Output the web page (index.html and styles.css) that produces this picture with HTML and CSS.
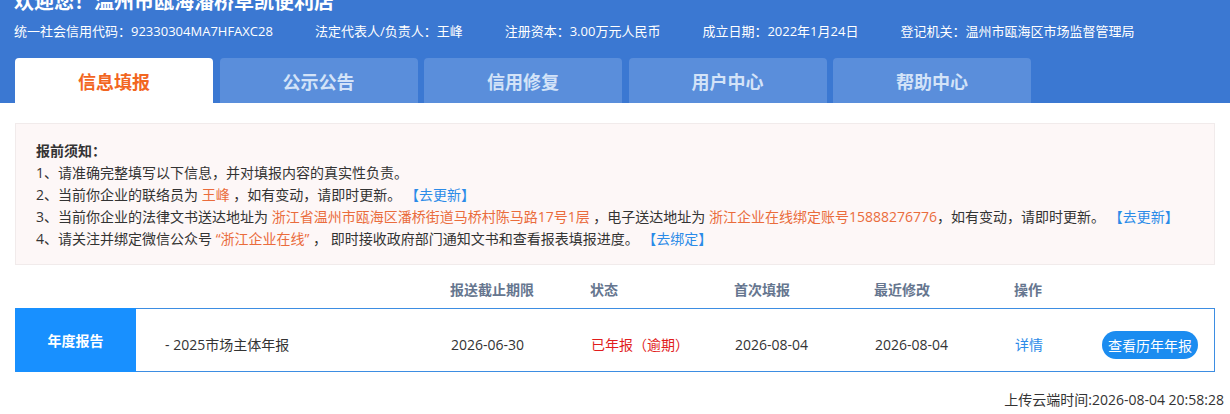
FILE: index.html
```html
<!DOCTYPE html>
<html lang="zh-CN">
<head>
<meta charset="utf-8">
<title>信息填报</title>
<link rel="stylesheet" href="styles.css">
</head>
<body>
<header class="top">
  <h1 class="welcome">欢迎您！温州市瓯海潘桥阜凯便利店</h1>
  <div class="info">
    <span class="info-item">统一社会信用代码：92330304MA7HFAXC28</span>
    <span class="info-item">法定代表人/负责人：王峰</span>
    <span class="info-item">注册资本：3.00万元人民币</span>
    <span class="info-item">成立日期：2022年1月24日</span>
    <span class="info-item">登记机关：温州市瓯海区市场监督管理局</span>
  </div>
  <nav class="tabs">
    <a class="tab active">信息填报</a>
    <a class="tab">公示公告</a>
    <a class="tab">信用修复</a>
    <a class="tab">用户中心</a>
    <a class="tab">帮助中心</a>
  </nav>
</header>

<main class="content">
  <section class="notice">
    <p class="notice-title">报前须知：</p>
    <p>1、请准确完整填写以下信息，并对填报内容的真实性负责。</p>
    <p>2、当前你企业的联络员为 <span class="hl">王峰</span> ，如有变动，请即时更新。 <a class="link">【去更新】</a></p>
    <p>3、当前你企业的法律文书送达地址为 <span class="hl">浙江省温州市瓯海区潘桥街道马桥村陈马路17号1层</span> ，电子送达地址为 <span class="hl">浙江企业在线绑定账号15888276776</span>，如有变动，请即时更新。 <a class="link">【去更新】</a></p>
    <p>4、请关注并绑定微信公众号 <span class="hl">“浙江企业在线”</span> ， 即时接收政府部门通知文书和查看报表填报进度。 <a class="link">【去绑定】</a></p>
  </section>

  <div class="grid head">
    <span></span>
    <span></span>
    <span>报送截止期限</span>
    <span>状态</span>
    <span>首次填报</span>
    <span>最近修改</span>
    <span>操作</span>
    <span></span>
  </div>

  <div class="grid report">
    <div class="kind">年度报告</div>
    <div class="cell name">- 2025市场主体年报</div>
    <div class="cell">2026-06-30</div>
    <div class="cell status">已年报（逾期）</div>
    <div class="cell">2026-08-04</div>
    <div class="cell">2026-08-04</div>
    <div class="cell"><a class="link">详情</a></div>
    <div class="cell"><button class="btn" type="button">查看历年年报</button></div>
  </div>

  <div class="upload">上传云端时间:2026-08-04 20:58:28</div>
</main>
</body>
</html>
```

FILE: styles.css
```css
* { box-sizing: border-box; }

html, body {
  margin: 0;
  padding: 0;
  background: #ffffff;
  overflow: hidden;
}

body {
  font-family: "Open Sans", "Noto Sans CJK SC", sans-serif;
  color: #333333;
  width: 1230px;
  height: 414px;
}

.top {
  background: #3b78d2;
  padding: 0 0 0 14px;
  height: 103px;
  display: flex;
  flex-direction: column;
}

.welcome {
  margin: -12px 0 0 0;
  font-size: 20px;
  line-height: 28px;
  font-weight: 700;
  color: #ffffff;
}

.info {
  margin-top: 5px;
  display: flex;
  font-size: 13px;
  line-height: 20px;
  color: #ffffff;
}

.info-item { margin-right: 42px; }

.tabs {
  margin-top: 17px;
  margin-left: 1px;
  display: flex;
  gap: 6.5px;
}

.tab {
  width: 198px;
  height: 45px;
  border-radius: 4px 4px 0 0;
  background: #5a8edb;
  color: #d3e3f8;
  font-size: 18px;
  font-weight: 700;
  display: flex;
  align-items: center;
  justify-content: center;
}

.tab.active {
  background: #ffffff;
  color: #f2661f;
}

.content {
  padding: 20px 0 0 15px;
}

.notice {
  width: 1200px;
  background: #fdf7f7;
  border: 1px solid #f1ebeb;
  padding: 16px 20px 14px 20px;
  font-size: 14px;
  line-height: 22px;
  color: #333333;
}

.notice p { margin: 0; white-space: nowrap; }

.notice-title { font-weight: 700; }

.hl { color: #ea6c3c; }

.link { color: #2b8be8; cursor: pointer; }

.grid {
  width: 1200px;
  display: grid;
  grid-template-columns: 120px 315px 140px 144px 140px 140px 88px 1fr;
  font-size: 14px;
}

.head {
  margin-top: 15px;
  height: 20px;
  line-height: 20px;
  font-weight: 700;
  color: #66768f;
}

.report {
  margin-top: 8px;
  height: 64px;
  border: 1px solid #3d8de2;
  align-items: center;
}

.kind {
  align-self: stretch;
  margin: -1px 0 -1px -1px;
  background: #1890ff;
  border-radius: 2px 0 0 2px;
  color: #ffffff;
  font-weight: 700;
  font-size: 14px;
  display: flex;
  align-items: center;
  justify-content: center;
}

.cell {
  padding-top: 10px;
  line-height: 20px;
  color: #333333;
  white-space: nowrap;
}

.cell.name { padding-left: 29px; }

.status { color: #e11c1c; }

.btn {
  width: 96px;
  height: 28px;
  margin-left: -1px;
  border: none;
  border-radius: 14px;
  background: #1b8cf0;
  color: #ffffff;
  font-family: inherit;
  font-size: 14px;
  padding: 0;
  cursor: pointer;
  display: block;
}

.upload {
  margin-top: 18px;
  padding-right: 6px;
  text-align: right;
  font-size: 14px;
  line-height: 20px;
  color: #333333;
}
```
